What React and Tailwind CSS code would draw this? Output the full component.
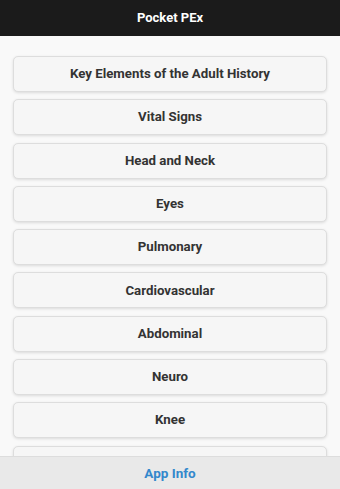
const items = [
  'Key Elements of the Adult History',
  'Vital Signs',
  'Head and Neck',
  'Eyes',
  'Pulmonary',
  'Cardiovascular',
  'Abdominal',
  'Neuro',
  'Knee',
  '',
];

export default function App() {
  return (
    <div className="relative h-[489px] w-[340px] overflow-hidden bg-[#f9f9f9] font-['Roboto',sans-serif]">
      {/* Header */}
      <div className="flex h-[36px] items-center justify-center bg-[#1b1b1b] text-[13px] font-bold text-white">
        Pocket PEx
      </div>

      {/* Menu */}
      <div className="flex flex-col gap-[7.3px] px-[13px] pt-[20px]">
        {items.map((label, i) => (
          <button
            key={i}
            className="flex h-[36px] items-center justify-center rounded-[5px] border border-[#dddddd] bg-[#f6f6f6] text-[13.25px] font-bold text-[#333333] shadow-[0_1px_3px_rgba(0,0,0,0.12)]"
          >
            {label}
          </button>
        ))}
      </div>

      {/* Footer */}
      <div className="absolute bottom-0 left-0 right-0 flex h-[33px] items-center justify-center border-t border-[#dddddd] bg-[#e9e9e9] text-[13.5px] font-bold text-[#3388cc]">
        App Info
      </div>
    </div>
  );
}
